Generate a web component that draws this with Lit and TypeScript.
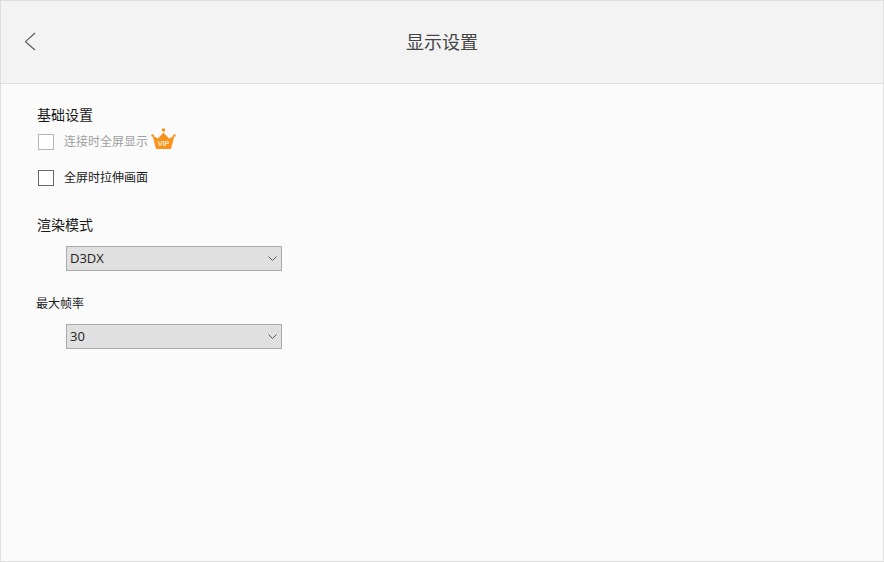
import { css, html, LitElement } from "lit";
import { customElement } from "lit/decorators.js";

@customElement("app-root")
export class AppRoot extends LitElement {
  render() {
    return html`
      <header>
        <svg class="back" width="14" height="20" viewBox="0 0 14 20">
          <path d="M12 1 L2.5 9.7 L12 18" fill="none" stroke="#555" stroke-width="1.1" />
        </svg>
        <h1>显示设置</h1>
      </header>
      <main>
        <h2 class="first">基础设置</h2>
        <div class="check disabled">
          <span class="box"></span>
          <span class="label">连接时全屏显示</span>
          <svg class="crown" width="25" height="22" viewBox="0 0 25 22">
            <circle cx="12.5" cy="2" r="1.8" fill="#f7931e" />
            <circle cx="1.6" cy="7.5" r="1.3" fill="#f7931e" />
            <circle cx="23.4" cy="7.5" r="1.3" fill="#f7931e" />
            <path d="M1.5 7.5 L7 10.5 L12.5 4.5 L18 10.5 L23.5 7.5 L20 21 L5 21 Z" fill="#f7931e" />
            <text x="12.5" y="17.5" text-anchor="middle" class="vip">VIP</text>
          </svg>
        </div>
        <div class="check">
          <span class="box"></span>
          <span class="label">全屏时拉伸画面</span>
        </div>
        <h2 class="mode">渲染模式</h2>
        <div class="select">
          <span>D3DX</span>
          <svg width="9" height="5" viewBox="0 0 9 5">
            <path d="M0.5 0.5 L4.5 4.5 L8.5 0.5" fill="none" stroke="#555" stroke-width="1" />
          </svg>
        </div>
        <h3>最大帧率</h3>
        <div class="select">
          <span>30</span>
          <svg width="9" height="5" viewBox="0 0 9 5">
            <path d="M0.5 0.5 L4.5 4.5 L8.5 0.5" fill="none" stroke="#555" stroke-width="1" />
          </svg>
        </div>
      </main>
    `;
  }

  static styles = css`
    :host {
      display: block;
      box-sizing: border-box;
      width: 884px;
      height: 562px;
      border: 1px solid #dedede;
      background: #fbfbfb;
      font-family: "Open Sans", "Noto Sans CJK SC", sans-serif;
      color: #1a1a1a;
      overflow: hidden;
    }

    header {
      height: 83px;
      box-sizing: border-box;
      border-bottom: 1px solid #dedede;
      background: #f3f3f3;
      display: flex;
      align-items: center;
      justify-content: center;
      position: relative;
    }

    .back {
      position: absolute;
      left: 22px;
      top: 31px;
    }

    h1 {
      margin: 0 0 1px;
      font-size: 18px;
      line-height: 24px;
      font-weight: 400;
      color: #444;
    }

    main {
      padding: 21px 0 0 36px;
    }

    h2 {
      margin: 0;
      font-size: 14px;
      line-height: 20px;
      font-weight: 400;
    }

    h3 {
      margin: 24px 0 11px -1px;
      font-size: 12px;
      line-height: 18px;
      font-weight: 400;
    }

    .first {
      margin-bottom: 9px;
    }

    .mode {
      margin: 29px 0 11px;
    }

    .check {
      display: flex;
      align-items: center;
      height: 16px;
      margin: 0 0 20px 1px;
    }

    .box {
      width: 16px;
      height: 16px;
      box-sizing: border-box;
      border: 1px solid #666;
      background: #fff;
    }

    .label {
      margin-left: 10px;
      font-size: 12px;
      line-height: 16px;
    }

    .disabled .box {
      border-color: #b4b4b4;
    }

    .disabled .label {
      color: #a0a0a0;
    }

    .crown {
      margin: -6px 0 0 3px;
      flex: none;
    }

    .vip {
      font-family: "Liberation Sans", sans-serif;
      font-size: 7px;
      font-weight: 700;
      fill: #fde9c8;
    }

    .select {
      width: 216px;
      height: 25px;
      box-sizing: border-box;
      margin-left: 29px;
      padding: 0 3px;
      border: 1px solid #aaa;
      background: #e0e0e0;
      display: flex;
      align-items: center;
      justify-content: space-between;
      font-size: 13px;
      color: #222;
    }

    .select span {
      margin-bottom: 2px;
    }

    .select svg {
      margin-right: 1px;
    }
  `;
}
